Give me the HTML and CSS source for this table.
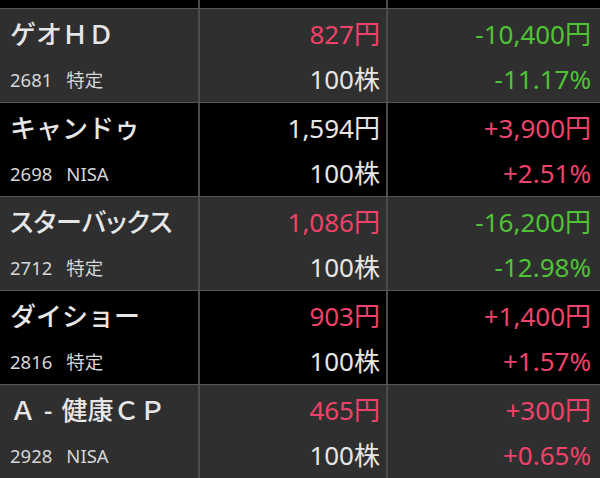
FILE: index.html
```html
<!DOCTYPE html>
<html lang="ja">
<head>
<meta charset="utf-8">
<link rel="stylesheet" href="styles.css">
</head>
<body>
<div class="list">
  <div class="row tail">
    <div class="cell c1"></div><div class="cell c2"></div><div class="cell c3"></div>
  </div>
  <div class="row gray">
    <div class="cell c1"><div class="l1 name">ゲオＨＤ</div><div class="l2 small"><span>2681</span><span class="acc">特定</span></div></div>
    <div class="cell c2"><div class="l1 red">827円</div><div class="l2">100株</div></div>
    <div class="cell c3"><div class="l1 green">-10,400円</div><div class="l2 green">-11.17%</div></div>
  </div>
  <div class="row black">
    <div class="cell c1"><div class="l1 name">キャンドゥ</div><div class="l2 small"><span>2698</span><span class="acc">NISA</span></div></div>
    <div class="cell c2"><div class="l1">1,594円</div><div class="l2">100株</div></div>
    <div class="cell c3"><div class="l1 red">+3,900円</div><div class="l2 red">+2.51%</div></div>
  </div>
  <div class="row gray">
    <div class="cell c1"><div class="l1 name prop">スターバックス</div><div class="l2 small"><span>2712</span><span class="acc">特定</span></div></div>
    <div class="cell c2"><div class="l1 red">1,086円</div><div class="l2">100株</div></div>
    <div class="cell c3"><div class="l1 green">-16,200円</div><div class="l2 green">-12.98%</div></div>
  </div>
  <div class="row black">
    <div class="cell c1"><div class="l1 name">ダイショー</div><div class="l2 small"><span>2816</span><span class="acc">特定</span></div></div>
    <div class="cell c2"><div class="l1 red">903円</div><div class="l2">100株</div></div>
    <div class="cell c3"><div class="l1 red">+1,400円</div><div class="l2 red">+1.57%</div></div>
  </div>
  <div class="row gray">
    <div class="cell c1"><div class="l1 name">Ａ<span class="dash">-</span>健康ＣＰ</div><div class="l2 small"><span>2928</span><span class="acc">NISA</span></div></div>
    <div class="cell c2"><div class="l1 red">465円</div><div class="l2">100株</div></div>
    <div class="cell c3"><div class="l1 red">+300円</div><div class="l2 red">+0.65%</div></div>
  </div>
</div>
</body>
</html>
```

FILE: styles.css
```css
html, body {
  margin: 0;
  padding: 0;
  background: #000;
  width: 600px;
  height: 478px;
  overflow: hidden;
}
.list {
  font-family: "Noto Sans", "Noto Sans CJK JP", sans-serif;
  color: #e6e6e6;
}
.row {
  display: grid;
  grid-template-columns: 200px 188px 1fr;
  height: 94px;
  box-sizing: border-box;
  border-top: 1px solid #565656;
}
.row.tail {
  height: 8px;
  border-top: none;
  background: #000;
}
.row.gray { background: #2f2f2f; }
.row.black { background: #000; }
.cell {
  box-sizing: border-box;
  display: flex;
  flex-direction: column;
}
.c1 { border-right: 2px solid #4c4c4c; padding-left: 10px; }
.c2 { border-right: 2px solid #4c4c4c; padding-right: 6px; align-items: flex-end; }
.c3 { padding-right: 9px; align-items: flex-end; }
.l1 {
  font-size: 26px;
  line-height: 36px;
  padding-top: 7px;
  white-space: nowrap;
}
.name { font-weight: 500; }
.prop { font-feature-settings: "palt"; }
.dash { margin: 0 9px 0 8px; }
.l2 {
  font-size: 26px;
  line-height: 36px;
  margin-top: 9px;
  white-space: nowrap;
}
.l2.small {
  font-size: 18.5px;
  padding-top: 1px;
  color: #d6d6d6;
}
.acc { margin-left: 14px; }
.red { color: #f0426a; }
.green { color: #4fc236; }
```
